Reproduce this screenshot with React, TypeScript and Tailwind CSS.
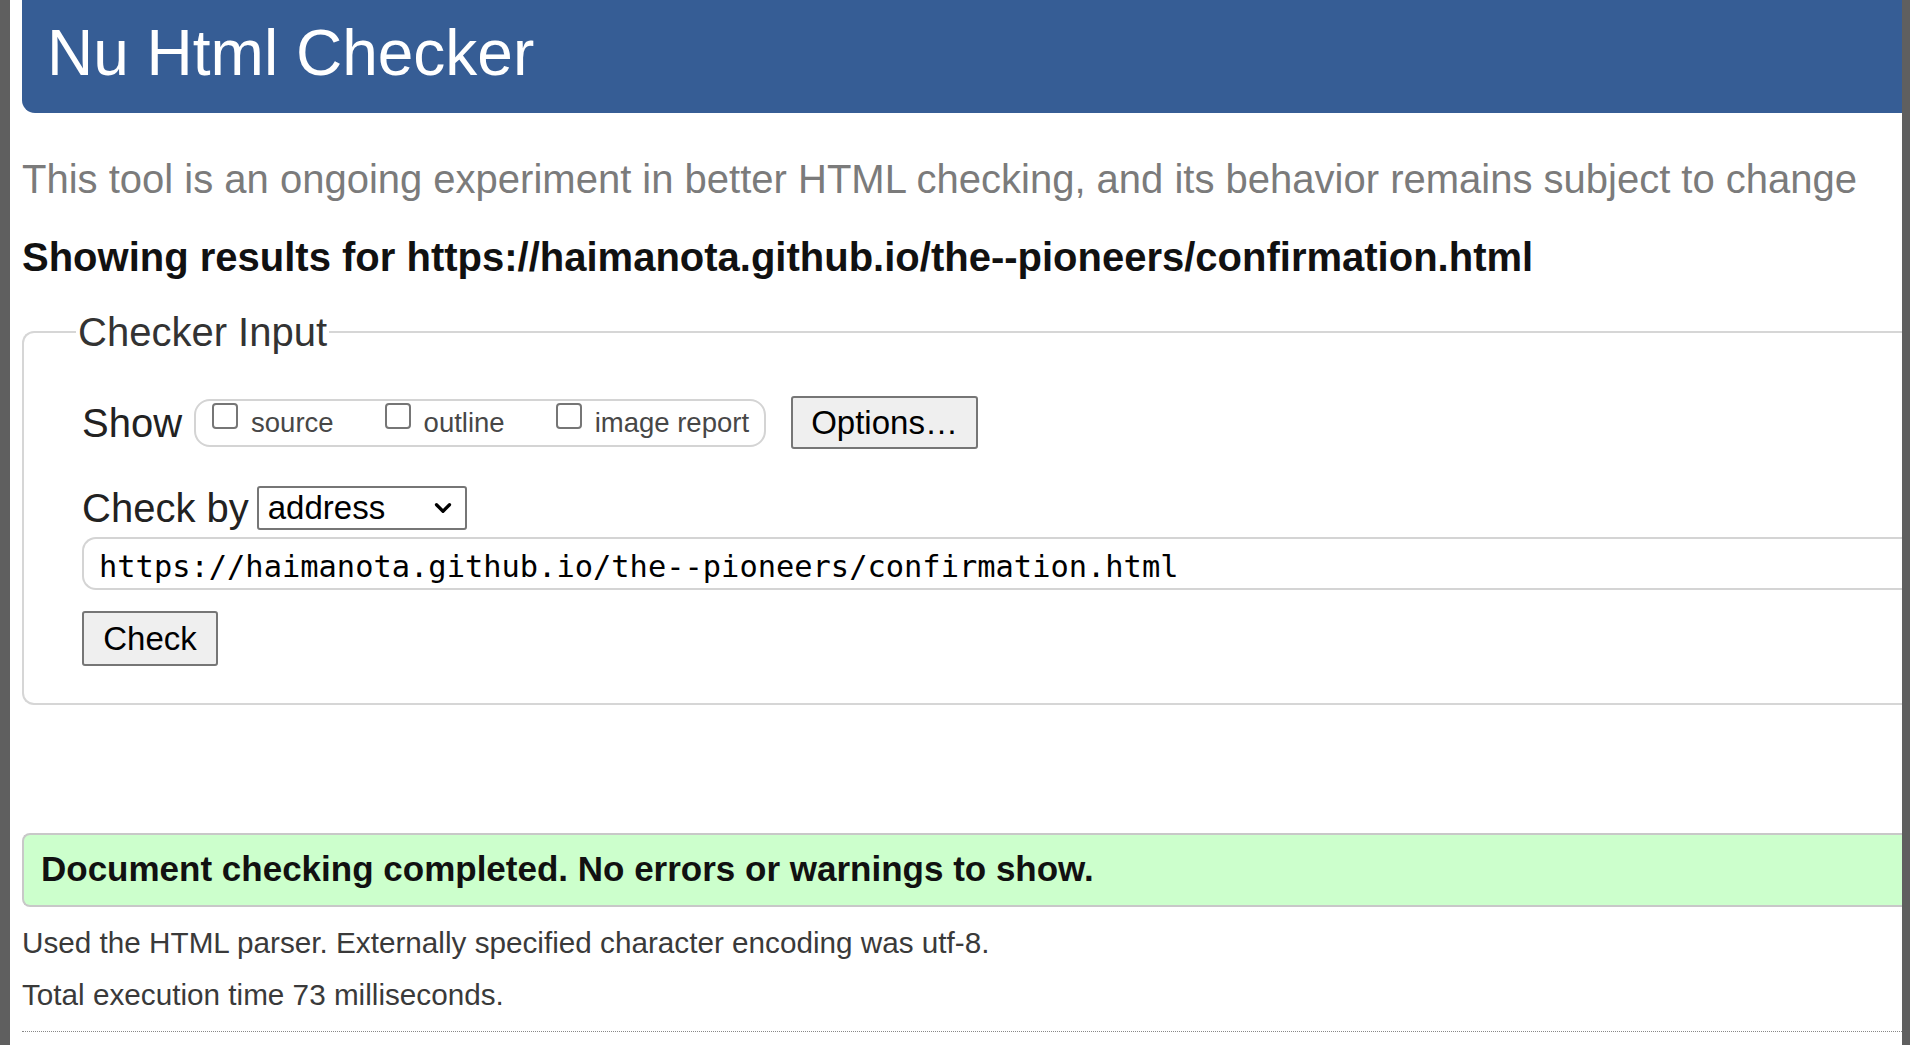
import { ChevronDown } from 'lucide-react';

const url = 'https://haimanota.github.io/the--pioneers/confirmation.html';

function Checkbox({ label, first }: { label: string; first?: boolean }) {
  return (
    <label className={first ? 'flex items-center' : 'ml-[51px] flex items-center'}>
      <input
        type="checkbox"
        className="mb-[14px] h-[26px] w-[26px] appearance-none rounded-[4px] border-2 border-[#767676] bg-white"
      />
      <span className="ml-[13px] text-[27.5px] leading-[32px] text-[#474747]">{label}</span>
    </label>
  );
}

export default function App() {
  return (
    <div className="flex h-screen w-full overflow-hidden bg-white font-['Liberation_Sans',Arial,sans-serif]">
      <div className="w-[10px] shrink-0 bg-[#5f5f5f]" />

      <main className="min-w-0 flex-1 pl-[12px]">
        {/* Title bar */}
        <header className="rounded-bl-[13px] bg-[#365d95] pb-[24px] pl-[25px] pt-[17px]">
          <h1 className="text-[64px] leading-[72px] text-white">Nu Html Checker</h1>
        </header>

        <p className="mt-[43px] whitespace-nowrap text-[40px] leading-[46px] text-[#7b7b7b]">
          This tool is an ongoing experiment in better HTML checking, and its behavior remains subject to change
        </p>
        <h2 className="mt-[32px] whitespace-nowrap text-[40px] font-bold leading-[46px] text-[#111]">
          Showing results for {url}
        </h2>

        {/* Checker input form */}
        <fieldset className="mt-[29px] rounded-l-[12px] border-2 border-r-0 border-[#d6d6d6] pb-[37px] pl-[52px] pt-[41px]">
          <legend className="px-[2px] text-[40px] leading-[46px] text-[#333]">Checker Input</legend>
          <div className="pl-[6px]">
            <div className="flex h-[53px] items-center">
              <span className="text-[40px] leading-[46px] text-[#222]">Show</span>
              <div className="ml-[12px] flex h-[48px] items-center rounded-[16px] border-2 border-[#d4d4d4] pl-[16px] pr-[15px]">
                <Checkbox label="source" first />
                <Checkbox label="outline" />
                <Checkbox label="image report" />
              </div>
              <button className="ml-[25px] h-[53px] w-[187px] rounded-[3px] border-2 border-[#767676] bg-[#efefef] text-[33px] text-black">
                Options…
              </button>
            </div>

            <div className="mt-[36px] flex h-[46px] items-center">
              <span className="text-[40px] leading-[46px] text-[#222]">Check by</span>
              <div className="ml-[8px] flex h-[44px] w-[210px] items-center justify-between rounded-[3px] border-2 border-[#767676] bg-white pl-[9px] pr-[9px]">
                <span className="text-[33px] leading-[38px] text-black">address</span>
                <ChevronDown className="h-[26px] w-[26px] text-black" strokeWidth={3} />
              </div>
            </div>

            <div className="mt-[6px] flex h-[53px] items-center rounded-l-[14px] border-2 border-r-0 border-[#d4d4d4] pl-[15px] pt-[6px]">
              <span className="whitespace-nowrap font-['DejaVu_Sans_Mono',monospace] text-[30.4px] text-black">{url}</span>
            </div>

            <button className="mt-[21px] h-[55px] w-[136px] rounded-[3px] border-2 border-[#767676] bg-[#efefef] text-[33px] text-black">
              Check
            </button>
          </div>
        </fieldset>

        {/* Result */}
        <div className="mt-[128px] rounded-l-[8px] border-2 border-r-0 border-[#c8c8c8] bg-[#ccffcc] pb-[16px] pl-[17px] pt-[14px]">
          <p className="text-[35px] font-bold leading-[40px] text-[#111]">
            Document checking completed. No errors or warnings to show.
          </p>
        </div>
        <p className="mt-[19px] text-[29.7px] leading-[34px] text-[#3a3a3a]">
          Used the HTML parser. Externally specified character encoding was utf-8.
        </p>
        <p className="mt-[18px] text-[29.7px] leading-[34px] text-[#3a3a3a]">Total execution time 73 milliseconds.</p>
        <div className="mt-[19px] border-t border-dotted border-[#888]" />
      </main>

      <div className="w-[8px] shrink-0 bg-[#5f5f5f]" />
    </div>
  );
}
